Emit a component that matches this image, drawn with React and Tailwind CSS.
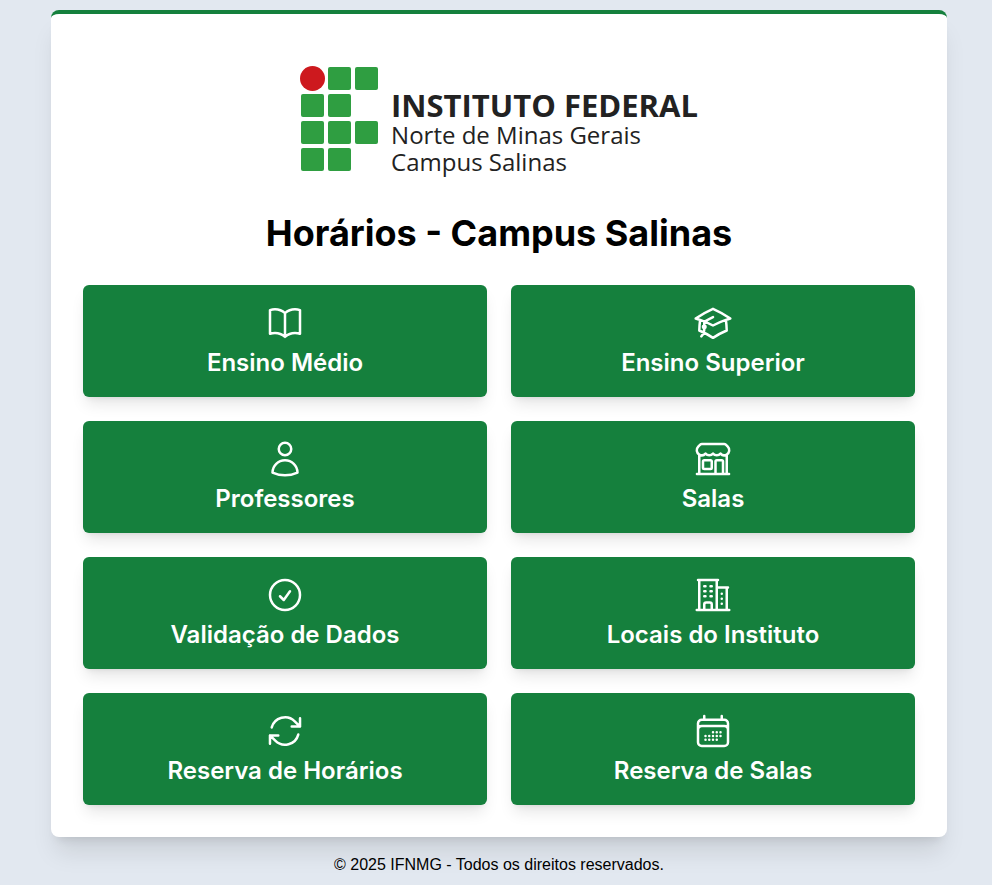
import {
  HiOutlineAcademicCap,
  HiOutlineArrowPath,
  HiOutlineBookOpen,
  HiOutlineBuildingOffice2,
  HiOutlineBuildingStorefront,
  HiOutlineCalendarDays,
  HiOutlineCheckCircle,
  HiOutlineUser,
} from "react-icons/hi2";

const items = [
  { label: "Ensino Médio", Icon: HiOutlineBookOpen },
  { label: "Ensino Superior", Icon: HiOutlineAcademicCap },
  { label: "Professores", Icon: HiOutlineUser },
  { label: "Salas", Icon: HiOutlineBuildingStorefront },
  { label: "Validação de Dados", Icon: HiOutlineCheckCircle },
  { label: "Locais do Instituto", Icon: HiOutlineBuildingOffice2 },
  { label: "Reserva de Horários", Icon: HiOutlineArrowPath },
  { label: "Reserva de Salas", Icon: HiOutlineCalendarDays },
];

// Green squares of the institute's mark, as [column, row]
const squares = [
  [1, 0], [2, 0],
  [0, 1], [1, 1],
  [0, 2], [1, 2], [2, 2],
  [0, 3], [1, 3],
];

function Logo() {
  return (
    <div className="flex justify-center gap-3 pt-5 pb-[38px]">
      <svg className="h-[106px] w-[79px]" viewBox="0 0 79 106" aria-hidden="true">
        <circle cx="12.5" cy="12.5" r="12.5" fill="#cd191e" />
        {squares.map(([col, row]) => (
          <rect
            key={`${col}-${row}`}
            x={1 + col * 27}
            y={1 + row * 27}
            width="23"
            height="23"
            rx="2"
            fill="#2f9e41"
          />
        ))}
      </svg>
      <div className="pt-6 font-['Open_Sans','Noto_Sans',sans-serif] text-2xl leading-[27px] text-[#222]">
        <p className="text-[31px] leading-[31px] font-bold">INSTITUTO FEDERAL</p>
        <p className="leading-[27px]">Norte de Minas Gerais</p>
        <p className="leading-[27px]">Campus Salinas</p>
      </div>
    </div>
  );
}

export default function App() {
  return (
    <div className="min-h-screen bg-slate-200 pt-2.5 pl-1.5 font-['Liberation_Sans',Arial,sans-serif] text-black">
      <main className="mx-auto max-w-4xl rounded-lg border-t-4 border-[#15803d] bg-white p-8 shadow-xl">
        <Logo />
        <h1 className="mb-8 text-center font-[Inter,sans-serif] text-4xl font-bold">
          Horários - Campus Salinas
        </h1>
        <nav className="grid grid-cols-2 gap-6">
          {items.map(({ label, Icon }) => (
            <button
              key={label}
              type="button"
              className="flex h-28 flex-col items-center justify-center gap-1 rounded-md bg-[#15803d] font-[Inter,sans-serif] text-2xl font-semibold text-white shadow-lg"
            >
              <Icon className="size-10" aria-hidden="true" />
              {label}
            </button>
          ))}
        </nav>
      </main>
      <footer className="mt-4 text-center">© 2025 IFNMG - Todos os direitos reservados.</footer>
    </div>
  );
}
